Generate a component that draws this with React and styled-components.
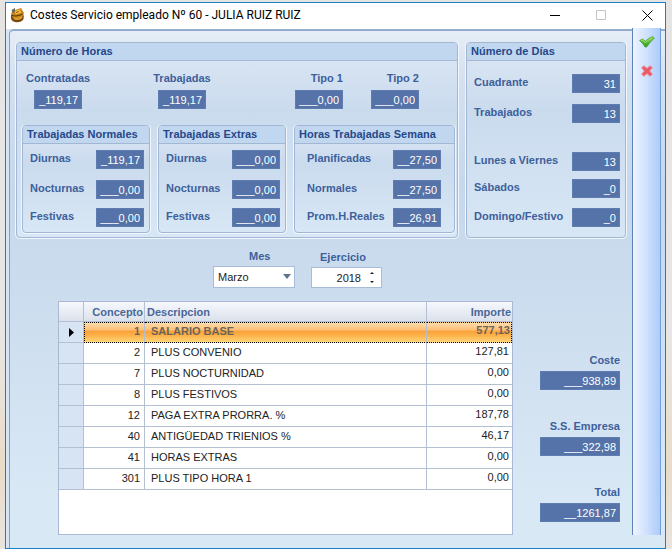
import React, { useId, useState } from "react";
import styled, { createGlobalStyle, css } from "styled-components";

const GlobalStyle = createGlobalStyle`
  *, *::before, *::after { box-sizing: border-box; }
  body {
    margin: 0;
    font-family: "Liberation Sans", Arial, sans-serif;
    font-size: 11px;
    color: #222;
  }
  input, select, button { font: inherit; margin: 0; }
`;

const Desktop = styled.div`
  min-height: 100vh;
  display: flex;
  padding: 2px 6px 0 5px;
  background: linear-gradient(#e6e4e3, #e8e6e4 60%, #e8dcc8 85%, #e8e4de);
`;

const Window = styled.main`
  flex: 1;
  min-width: 0;
  display: flex;
  flex-direction: column;
  border: 1px solid #1b7fc6;
  background: #d6e5f5;
`;

const TitleBar = styled.header`
  display: flex;
  align-items: center;
  height: 26px;
  padding: 0 8px 2px 4px;
  background: #fff;
`;

const Title = styled.h1`
  flex: 1;
  margin: 0 0 0 5px;
  font: 400 12px/18px Roboto, "Open Sans", sans-serif;
  color: #000;
  white-space: nowrap;
`;

const WindowButtons = styled.div`
  display: flex;
  gap: 26px;
`;

const IconButton = styled.button`
  display: grid;
  place-items: center;
  width: 20px;
  height: 18px;
  padding: 0;
  border: 0;
  background: none;
  color: #000;

  &:disabled { color: #c4c4c4; }
`;

const Body = styled.div`
  flex: 1;
  display: flex;
  margin-left: 3px;
  padding-right: 4px;
  border-top: 2px solid #94acd0;
  border-left: 1px solid #7f9fc9;
  border-top-left-radius: 5px;
  background: linear-gradient(#e6edf6, #d3e0f0 10%, #c6d8ec 30%, #cbdcee 50%, #d9e8f5 90%);
`;

const Content = styled.div`
  flex: 1;
  min-width: 0;
  display: flex;
  flex-direction: column;
  padding: 11px 6px 13px;
`;

const Sidebar = styled.nav`
  display: flex;
  flex-direction: column;
  align-items: center;
  gap: 11px;
  width: 29px;
  margin: -3px 0 13px;
  padding-top: 5px;
  border-left: 1px solid #5f84b8;
  border-right: 1px solid #6f9fdf;
  background: linear-gradient(90deg, #edf4ff, #cfe1fd 50%, #aecbfa);
`;

const Groups = styled.div`
  display: grid;
  grid-template-columns: minmax(0, 1fr) 160px;
  gap: 8px;
`;

const Group = styled.section`
  border: 1px solid #a3b7d3;
  border-radius: 4px;
  box-shadow: -1px 0 #f1f6fc, 1px 0 #f1f6fc, 0 1px #f1f6fc;
  background: linear-gradient(#dde7f4, #cadbee 35%, #d8e7f5);
`;

const GroupTitle = styled.h2`
  margin: 0;
  padding: 0 4px;
  border-bottom: 1px solid #a3b7d3;
  border-radius: 3px 3px 0 0;
  background: #c1d7f0;
  font: 700 11px/17px "Liberation Sans", Arial, sans-serif;
  color: #25488a;
  white-space: nowrap;
`;

const Summary = styled.div`
  display: grid;
  grid-template-columns: 124fr 145fr 76fr 81fr;
  justify-items: start;
  padding: 9px 5px 16px 9px;
`;

const SubGroups = styled.div`
  display: grid;
  grid-template-columns: 128fr 128fr 161fr;
  gap: 8px;
  padding: 0 2px 4px 5px;
`;

const Rows = styled.div`
  display: grid;
  grid-template-rows: 30px 28px 20px;
  padding: ${(p) => (p.$wide ? "6px 13px 4px 12px" : "6px 5px 4px 7px")};
`;

const DayRows = styled.div`
  display: grid;
  grid-template-rows: 30px 48px 27px 29px 19px;
  padding: 13px 5px 10px 7px;
`;

const Row = styled.div`
  display: flex;
  justify-content: space-between;
  align-items: flex-start;
`;

const Label = styled.label`
  font-weight: 700;
  line-height: 17px;
  color: #3d5f9b;
  white-space: nowrap;
`;

const Stat = styled.div`
  display: flex;
  flex-direction: column;
  align-items: ${(p) => p.$align || "center"};
  gap: 4px;
  min-width: ${(p) => (p.$align ? "48px" : "64px")};

  ${Label} { line-height: 16px; }
`;

const Field = styled.input`
  display: block;
  width: ${(p) => (p.$wide ? "80px" : "48px")};
  height: 19px;
  padding: 1px 3px 0;
  border: 1px solid #5f7cb0;
  border-radius: 0;
  background: #5573a8;
  color: #fff;
  text-align: right;
`;

const Filters = styled.div`
  display: flex;
  align-items: flex-end;
  gap: 16px;
  padding: 10px 0 13px 197px;
`;

const Filter = styled.div`
  display: flex;
  flex-direction: column;
  gap: 1px;

  ${Label} { padding-left: ${(p) => p.$indent}; }
`;

const SelectBox = styled.div`
  position: relative;
  width: 82px;

  svg {
    position: absolute;
    right: 4px;
    top: 8px;
    pointer-events: none;
  }
`;

const boxed = css`
  border: 1px solid #a6bcd9;
  background: #fff;
`;

const Select = styled.select`
  ${boxed}
  display: block;
  width: 100%;
  height: 22px;
  padding: 0 16px 0 4px;
  border-radius: 0;
  appearance: none;
  color: #222;
`;

const Spinner = styled.div`
  ${boxed}
  display: flex;
  width: 71px;
  height: 21px;

  input {
    flex: 1;
    min-width: 0;
    padding: 0 6px 0 4px;
    border: 0;
    background: none;
    color: #222;
    text-align: right;
  }
`;

const Steps = styled.div`
  display: flex;
  flex-direction: column;
  width: 14px;

  button {
    flex: 1;
    width: 10px;
    height: auto;
  }
`;

const Lower = styled.div`
  flex: 1;
  display: flex;
  gap: 27px;
  padding: 0 6px 0 42px;
`;

const TableFrame = styled.div`
  flex: 1;
  min-width: 0;
  border: 1px solid #a9b9d2;
  background: #fff;
`;

const Table = styled.table`
  width: 100%;
  table-layout: fixed;
  border-collapse: separate;
  border-spacing: 0;
`;

const HeadCell = styled.th`
  width: ${(p) => p.$width || "auto"};
  height: 20px;
  padding: 1px 1px 0 2px;
  border-right: 1px solid #b4bfd2;
  border-bottom: 1px solid #b4bfd2;
  background: linear-gradient(#f6f8fc, #dbe1ec);
  font-weight: 700;
  line-height: 18px;
  text-align: ${(p) => p.$align || "left"};
  color: #4a6799;

  &:last-child { border-right: 0; }
`;

const Cell = styled.td`
  height: 21px;
  padding: ${(p) => (p.$text ? "0 6px 2px" : "0 4px 2px")};
  border-right: 1px solid #b4bfd2;
  border-bottom: 1px solid #b4bfd2;
  line-height: 15px;
  text-align: ${(p) => (p.$text ? "left" : "right")};
  white-space: nowrap;
  overflow: hidden;

  &:last-child {
    padding: 0 3px 4px;
    border-right: 0;
  }
`;

const Marker = styled.td`
  padding: 0;
  border-right: 1px solid #b4bfd2;
  border-bottom: 1px solid #b4bfd2;
  background: #d6e4f4;
  text-align: center;

  svg { display: block; margin: 0 auto; }
`;

const TableRow = styled.tr`
  ${(p) =>
    p.$selected &&
    css`
      ${Cell} {
        border-top: 1px dotted #000;
        border-bottom: 1px dotted #000;
        background: linear-gradient(#fddcab, #fdc079 35%, #fba238 45%, #fdb650 70%, #fed478);
        font-weight: 700;
        color: #6b6558;
      }
      ${Marker} + ${Cell} { border-left: 1px dotted #000; }
      ${Cell}:last-child {
        padding-right: 1px;
        border-right: 1px dotted #000;
      }
    `}
`;

const Totals = styled.div`
  display: flex;
  flex-direction: column;
  gap: 28px;
  padding-top: 51px;
`;

const Total = styled.div`
  display: flex;
  flex-direction: column;
  align-items: flex-end;
  gap: 3px;

  ${Label} { line-height: 16px; }
`;

const Labelled = ({ as: Wrapper = Row, label, value, wide, ...rest }) => {
  const id = useId();
  return (
    <Wrapper {...rest}>
      <Label htmlFor={id}>{label}</Label>
      <Field id={id} defaultValue={value} readOnly $wide={wide} />
    </Wrapper>
  );
};

const AppIcon = () => (
  <svg width="15" height="16" viewBox="0 0 15 16" aria-hidden="true">
    <path d="M1 8 Q0 14 5 15 Q10 16 13 13 Q15 9 12 6 Z" fill="#7d4710" />
    <path d="M2 4 L11 1 L14 6 L12 11 L4 12 L1 8 Z" fill="#c8871b" />
    <path d="M4 4 L10 2.5 L11 6 L6 7 Z" fill="#f3bf3e" />
    <path d="M1.5 8 Q6 10.5 12.5 7" fill="none" stroke="#5a3612" strokeWidth="1.1" />
    <path d="M4 11 Q8 13.5 12 10" fill="none" stroke="#dda133" strokeWidth="2" />
    <path d="M1.5 3 L5 1 L5 5 L3 6 Z" fill="#6d665a" />
    <path d="M6 5.5 L9 4.5" stroke="#8a5516" strokeWidth="1" />
  </svg>
);

const CheckIcon = () => (
  <svg width="16" height="12" viewBox="0 0 16 12" aria-hidden="true">
    <defs>
      <linearGradient id="leaf" x1="0" y1="0" x2="0" y2="1">
        <stop offset="0" stopColor="#8ed860" />
        <stop offset="1" stopColor="#2f9a1e" />
      </linearGradient>
    </defs>
    <path
      d="M0.6 4.6 L3.4 3 L6.4 5.2 Q9.4 2.2 13.4 0.6 L15.4 2 Q11 6 7.6 11 L6 11 Q4 7.4 0.6 4.6 Z"
      fill="url(#leaf)"
      stroke="#41a52c"
      strokeWidth="0.8"
    />
    <path d="M2 4.6 L3.4 4 L6.4 6.4 L12.8 1.8" fill="none" stroke="#b9ee96" strokeWidth="0.7" />
  </svg>
);

const CrossIcon = () => (
  <svg width="12" height="12" viewBox="0 0 12 12" aria-hidden="true">
    <path
      d="M3 0.8 L6 3.4 L9 0.8 L11.4 2.8 L8.6 6 L11.4 9.2 L9 11.3 L6 8.6 L3 11.3 L0.6 9.2 L3.4 6 L0.6 2.8 Z"
      fill="#ec5968"
      stroke="#f0858f"
      strokeWidth="0.8"
    />
  </svg>
);

const Stroke = ({ d }) => (
  <svg width="11" height="11" viewBox="0 0 11 11" fill="none" stroke="currentColor" aria-hidden="true">
    <path d={d} />
  </svg>
);

const Triangle = ({ width, height, points, fill }) => (
  <svg width={width} height={height} aria-hidden="true">
    <polygon points={points} fill={fill} />
  </svg>
);

const subGroups = [
  {
    title: "Trabajadas Normales",
    rows: [["Diurnas", "_119,17"], ["Nocturnas", "___0,00"], ["Festivas", "___0,00"]],
  },
  {
    title: "Trabajadas Extras",
    rows: [["Diurnas", "___0,00"], ["Nocturnas", "___0,00"], ["Festivas", "___0,00"]],
  },
  {
    title: "Horas Trabajadas Semana",
    wide: true,
    rows: [["Planificadas", "__27,50"], ["Normales", "__27,50"], ["Prom.H.Reales", "__26,91"]],
  },
];

const days = [
  ["Cuadrante", "31"],
  ["Trabajados", "13"],
  ["Lunes a Viernes", "13"],
  ["Sábados", "_0"],
  ["Domingo/Festivo", "_0"],
];

const concepts = [
  [1, "SALARIO BASE", "577,13"],
  [2, "PLUS CONVENIO", "127,81"],
  [7, "PLUS NOCTURNIDAD", "0,00"],
  [8, "PLUS FESTIVOS", "0,00"],
  [12, "PAGA EXTRA PRORRA. %", "187,78"],
  [40, "ANTIGÜEDAD TRIENIOS %", "46,17"],
  [41, "HORAS EXTRAS", "0,00"],
  [301, "PLUS TIPO HORA 1", "0,00"],
];

const months = [
  "Enero", "Febrero", "Marzo", "Abril", "Mayo", "Junio", "Julio",
  "Agosto", "Septiembre", "Octubre", "Noviembre", "Diciembre",
];

export default function App() {
  const [year, setYear] = useState(2018);
  const [selected, setSelected] = useState(1);

  return (
    <>
      <GlobalStyle />
      <Desktop>
        <Window>
          <TitleBar>
            <AppIcon />
            <Title>Costes Servicio empleado Nº 60 - JULIA RUIZ RUIZ</Title>
            <WindowButtons>
              <IconButton aria-label="Minimizar"><Stroke d="M0 5.5H10" /></IconButton>
              <IconButton aria-label="Maximizar" disabled><Stroke d="M0.5 0.5H9.5V9.5H0.5Z" /></IconButton>
              <IconButton aria-label="Cerrar"><Stroke d="M0.5 0.5L10.5 10.5M10.5 0.5L0.5 10.5" /></IconButton>
            </WindowButtons>
          </TitleBar>
          <Body>
            <Content>
              <Groups>
                <Group>
                  <GroupTitle>Número de Horas</GroupTitle>
                  <Summary>
                    <Labelled as={Stat} label="Contratadas" value="_119,17" />
                    <Labelled as={Stat} label="Trabajadas" value="_119,17" />
                    <Labelled as={Stat} label="Tipo 1" value="___0,00" $align="flex-end" />
                    <Labelled as={Stat} label="Tipo 2" value="___0,00" $align="flex-end" />
                  </Summary>
                  <SubGroups>
                    {subGroups.map((group) => (
                      <Group key={group.title}>
                        <GroupTitle>{group.title}</GroupTitle>
                        <Rows $wide={group.wide}>
                          {group.rows.map(([label, value]) => (
                            <Labelled key={label} label={label} value={value} />
                          ))}
                        </Rows>
                      </Group>
                    ))}
                  </SubGroups>
                </Group>
                <Group>
                  <GroupTitle>Número de Días</GroupTitle>
                  <DayRows>
                    {days.map(([label, value]) => (
                      <Labelled key={label} label={label} value={value} />
                    ))}
                  </DayRows>
                </Group>
              </Groups>

              <Filters>
                <Filter $indent="36px">
                  <Label htmlFor="mes">Mes</Label>
                  <SelectBox>
                    <Select id="mes" defaultValue="Marzo">
                      {months.map((month) => <option key={month}>{month}</option>)}
                    </Select>
                    <Triangle width={8} height={5} points="0,0 8,0 4,5" fill="#5b7391" />
                  </SelectBox>
                </Filter>
                <Filter $indent="9px">
                  <Label htmlFor="ejercicio">Ejercicio</Label>
                  <Spinner>
                    <input
                      id="ejercicio"
                      value={year}
                      onChange={(e) => setYear(Number(e.target.value) || 0)}
                    />
                    <Steps>
                      <IconButton aria-label="Aumentar" onClick={() => setYear(year + 1)}>
                        <Triangle width={4} height={2} points="0,2 2,0 4,2" fill="#222" />
                      </IconButton>
                      <IconButton aria-label="Disminuir" onClick={() => setYear(year - 1)}>
                        <Triangle width={4} height={2} points="0,0 4,0 2,2" fill="#222" />
                      </IconButton>
                    </Steps>
                  </Spinner>
                </Filter>
              </Filters>

              <Lower>
                <TableFrame>
                  <Table>
                    <thead>
                      <tr>
                        <HeadCell as="td" $width="25px" />
                        <HeadCell $width="61px" $align="right">Concepto</HeadCell>
                        <HeadCell>Descripcion</HeadCell>
                        <HeadCell $width="85px" $align="right">Importe</HeadCell>
                      </tr>
                    </thead>
                    <tbody>
                      {concepts.map(([code, name, amount]) => (
                        <TableRow key={code} $selected={code === selected} onClick={() => setSelected(code)}>
                          <Marker>
                            {code === selected && (
                              <Triangle width={5} height={9} points="0,0 5,4.5 0,9" fill="#000" />
                            )}
                          </Marker>
                          <Cell>{code}</Cell>
                          <Cell $text>{name}</Cell>
                          <Cell>{amount}</Cell>
                        </TableRow>
                      ))}
                    </tbody>
                  </Table>
                </TableFrame>
                <Totals>
                  <Labelled as={Total} label="Coste" value="___938,89" wide />
                  <Labelled as={Total} label="S.S. Empresa" value="___322,98" wide />
                  <Labelled as={Total} label="Total" value="__1261,87" wide />
                </Totals>
              </Lower>
            </Content>
            <Sidebar aria-label="Acciones">
              <IconButton aria-label="Aceptar"><CheckIcon /></IconButton>
              <IconButton aria-label="Cancelar"><CrossIcon /></IconButton>
            </Sidebar>
          </Body>
        </Window>
      </Desktop>
    </>
  );
}
